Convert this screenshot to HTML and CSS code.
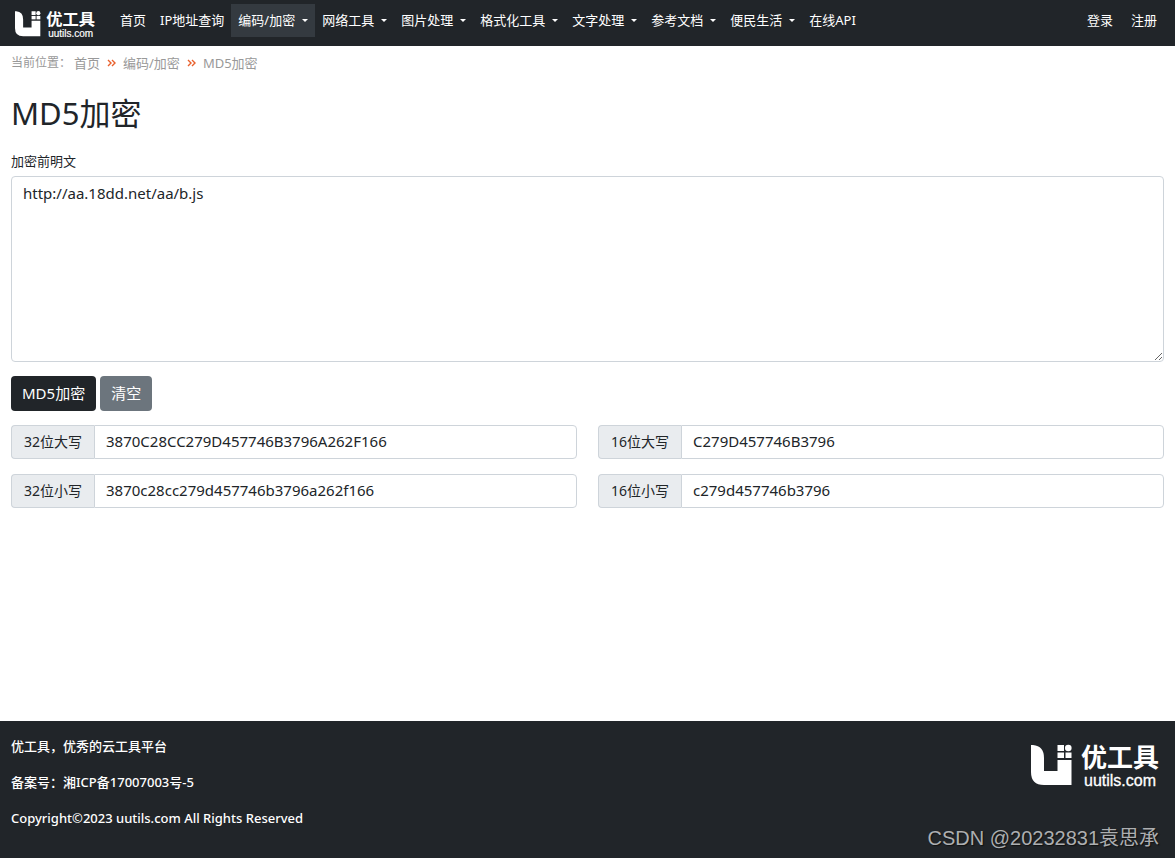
FILE: index.html
```html
<!DOCTYPE html>
<html lang="zh-CN">
<head>
<meta charset="utf-8">
<meta name="viewport" content="width=device-width, initial-scale=1">
<title>MD5加密</title>
<link rel="stylesheet" href="styles.css">
</head>
<body>
<header class="navbar">
  <a class="brand" href="#" aria-label="优工具 uutils.com">
    <svg class="logo" viewBox="0 0 128 44">
      <path d="M0 0H2Q13 1 13 13V26H26.500V15H40.500V40H13Q0 40 0 27Z"/>
      <rect x="26.500" y="0" width="6.500" height="6"/><circle cx="37.300" cy="3" r="3.300"/>
      <rect x="26.500" y="7.500" width="6.500" height="5.500"/><rect x="34.500" y="7.500" width="6" height="5.500"/>
      <text class="logo-name" x="50" y="22">优工具</text>
      <text class="logo-site" x="53" y="41">uutils.com</text>
    </svg>
  </a>
  <nav class="menu">
    <a class="item" href="#">首页</a>
    <a class="item" href="#">IP地址查询</a>
    <a class="item drop active" href="#">编码/加密</a>
    <a class="item drop" href="#">网络工具</a>
    <a class="item drop" href="#">图片处理</a>
    <a class="item drop" href="#">格式化工具</a>
    <a class="item drop" href="#">文字处理</a>
    <a class="item drop" href="#">参考文档</a>
    <a class="item drop" href="#">便民生活</a>
    <a class="item" href="#">在线API</a>
  </nav>
  <nav class="account">
    <a href="#">登录</a>
    <a href="#">注册</a>
  </nav>
</header>

<main class="content">
  <nav class="crumbs">
    <span class="crumbs-label">当前位置：</span>
    <a href="#">首页</a>
    <svg class="sep" viewBox="0 0 9 8"><path d="M1 1L4 4L1 7M5 1L8 4L5 7"/></svg>
    <a href="#">编码/加密</a>
    <svg class="sep" viewBox="0 0 9 8"><path d="M1 1L4 4L1 7M5 1L8 4L5 7"/></svg>
    <a href="#">MD5加密</a>
  </nav>
  <h1 class="title">MD5加密</h1>
  <form class="form">
    <label class="field-label" for="plain">加密前明文</label>
    <textarea class="plain" id="plain" spellcheck="false">http://aa.18dd.net/aa/b.js</textarea>
    <div class="actions">
      <button class="btn btn-dark" type="button">MD5加密</button>
      <button class="btn btn-gray" type="reset">清空</button>
    </div>
    <div class="results">
      <div class="group"><label class="addon" for="u32">32位大写</label><input class="value" id="u32" type="text" value="3870C28CC279D457746B3796A262F166"></div>
      <div class="group"><label class="addon" for="u16">16位大写</label><input class="value" id="u16" type="text" value="C279D457746B3796"></div>
      <div class="group"><label class="addon" for="l32">32位小写</label><input class="value" id="l32" type="text" value="3870c28cc279d457746b3796a262f166"></div>
      <div class="group"><label class="addon" for="l16">16位小写</label><input class="value" id="l16" type="text" value="c279d457746b3796"></div>
    </div>
  </form>
</main>

<footer class="footer">
  <div class="about">
    <p>优工具，优秀的云工具平台</p>
    <p>备案号：<a href="#">湘ICP备17007003号-5</a></p>
    <p>Copyright©2023 uutils.com All Rights Reserved</p>
  </div>
  <svg class="logo logo-large" viewBox="0 0 128 44">
    <path d="M0 0H2Q13 1 13 13V26H26.500V15H40.500V40H13Q0 40 0 27Z"/>
    <rect x="26.500" y="0" width="6.500" height="6"/><circle cx="37.300" cy="3" r="3.300"/>
    <rect x="26.500" y="7.500" width="6.500" height="5.500"/><rect x="34.500" y="7.500" width="6" height="5.500"/>
    <text class="logo-name" x="50" y="22">优工具</text>
    <text class="logo-site" x="53" y="41">uutils.com</text>
  </svg>
  <span class="watermark">CSDN @20232831袁思承</span>
</footer>
</body>
</html>
```
FILE: styles.css
```css
* {
  box-sizing: border-box;
}

body {
  display: flex;
  flex-direction: column;
  min-height: 100vh;
  margin: 0;
  color: #212529;
  background: #fff;
  font: 13px/20px "Noto Sans", "Noto Sans CJK SC", sans-serif;
}

a {
  color: inherit;
  text-decoration: none;
}

.navbar {
  display: flex;
  align-items: flex-start;
  height: 46px;
  padding: 4px 18px 0 15px;
  color: #fff;
  background: #212529;
}

.brand {
  display: flex;
  padding-top: 7px;
  margin-right: 18px;
}

.logo {
  width: 80px;
  height: 28px;
  fill: #fff;
  overflow: visible;
}

.logo-name {
  font: bold 26px "Noto Sans CJK SC", sans-serif;
}

.logo-site {
  font: 16px "Liberation Sans", sans-serif;
  stroke: #fff;
  stroke-width: 0.3px;
}

.menu {
  display: flex;
}

.item {
  display: flex;
  align-items: center;
  height: 33px;
  padding: 0 7px 2px;
  white-space: nowrap;
}

.drop::after {
  content: "";
  margin: 2px 0 0 7px;
  border: 3px solid transparent;
  border-top-color: #fff;
  border-bottom: 0;
}

.active {
  background: #343a40;
}

.account {
  display: flex;
  gap: 18px;
  margin-left: auto;
  line-height: 32px;
}

.content {
  flex: 1;
  padding: 7px 11px 0;
}

.crumbs {
  display: flex;
  align-items: center;
  color: #999;
}

.crumbs-label {
  margin-right: 3px;
  font-size: 12px;
}

.sep {
  width: 9px;
  height: 8px;
  margin: 0 7px;
  fill: none;
  stroke: #e9602c;
  stroke-width: 1.4px;
}

.title {
  margin: 20px 0 18px;
  font-size: 31px;
  font-weight: 400;
  line-height: 40px;
}

.field-label {
  display: block;
  margin-bottom: 5px;
}

.plain,
.value {
  border: 1px solid #ced4da;
  border-radius: 4px;
  color: #212529;
  background: #fff;
  font: 15px/22px "Noto Sans", "Noto Sans CJK SC", sans-serif;
}

.plain {
  display: block;
  width: 100%;
  height: 186px;
  padding: 5px 11px;
  resize: vertical;
}

.actions {
  display: flex;
  gap: 4px;
  margin: 14px 0;
}

.btn {
  height: 35px;
  padding: 0 11px 2px;
  border: 0;
  border-radius: 4px;
  color: #fff;
  font: 15px/22px "Noto Sans", "Noto Sans CJK SC", sans-serif;
}

.btn-dark {
  background: #212529;
}

.btn-gray {
  background: #6c757d;
}

.results {
  display: grid;
  grid-template-columns: 1fr 1fr;
  gap: 15px 21px;
}

.group {
  display: flex;
  height: 34px;
}

.addon {
  flex: none;
  width: 83px;
  border: 1px solid #ced4da;
  border-right: 0;
  border-radius: 4px 0 0 4px;
  background: #e9ecef;
  font-size: 14px;
  line-height: 32px;
  text-align: center;
}

.value {
  flex: 1;
  min-width: 0;
  padding: 0 11px 2px;
  border-radius: 0 4px 4px 0;
}

.footer {
  position: relative;
  display: flex;
  justify-content: space-between;
  padding: 15px 16px 30px 11px;
  color: #fff;
  background: #212529;
}

.about {
  display: grid;
  gap: 16px;
  font-weight: 500;
}

.about p {
  margin: 0;
}

.logo-large {
  width: 128px;
  height: 44px;
  margin-top: 9px;
}

.watermark {
  position: absolute;
  right: 16px;
  bottom: 7px;
  color: #adafb1;
  font: 20px/26px "Liberation Sans", "Noto Sans CJK SC", sans-serif;
  text-shadow: 1px 1px 1px #111;
}
```
